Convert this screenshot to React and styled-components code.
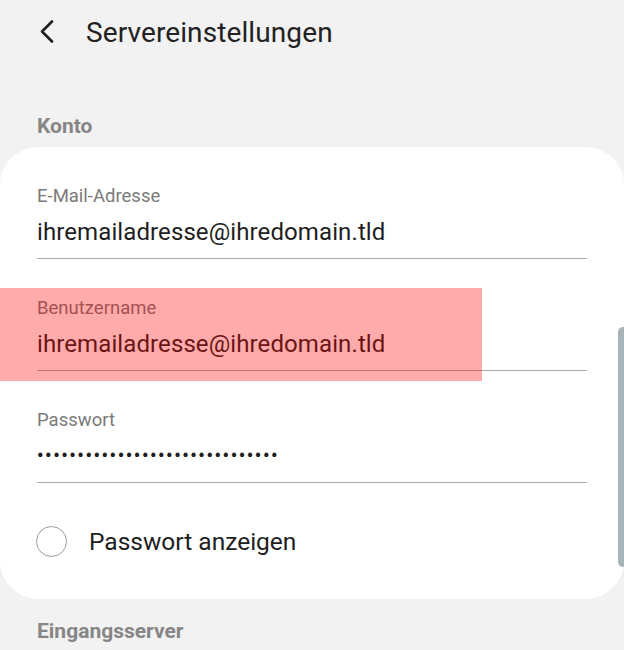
import React from "react";
import styled, { createGlobalStyle } from "styled-components";

const Global = createGlobalStyle`
  html, body { margin: 0; padding: 0; background: #f2f2f2; }
  body { font-family: Roboto, "Noto Sans", "Liberation Sans", sans-serif; -webkit-font-smoothing: antialiased; }
`;

const Screen = styled.div`
  position: relative;
  width: 624px;
  height: 650px;
  overflow: hidden;
  background: #f2f2f2;
`;

const Header = styled.header`
  display: flex;
  align-items: center;
  height: 64px;
  padding-left: 38px;
  gap: 30px;
`;

const BackButton = styled.button`
  display: flex;
  align-items: center;
  justify-content: center;
  width: 18px;
  height: 28px;
  padding: 0;
  border: 0;
  background: none;
  color: #1f1f1f;
`;

const Title = styled.h1`
  margin: 0;
  font-size: 28px;
  font-weight: 400;
  color: #222;
  letter-spacing: 0.1px;
`;

const SectionTitle = styled.h2`
  margin: 0;
  padding: ${(p) => p.$pad};
  font-size: 21px;
  line-height: 24px;
  font-weight: 700;
  color: #868686;
`;

const Card = styled.section`
  position: relative;
  background: #fff;
  border-radius: 38px;
  padding: 0 37px;
`;

const Field = styled.div`
  display: flex;
  flex-direction: column;
  padding: 37px 0 10px;
  border-bottom: 1.5px solid #a8a8a8;
`;

const Label = styled.label`
  font-size: 18.5px;
  line-height: 24px;
  color: #7a7a7a;
`;

const Value = styled.div`
  margin-top: 8px;
  font-size: 24px;
  line-height: 32px;
  color: #1e1e1e;
  letter-spacing: 0.1px;
`;

const MaskValue = styled(Value)`
  font-size: 18px;
  font-weight: 700;
  letter-spacing: 1.6px;
`;

const CheckRow = styled.div`
  display: flex;
  align-items: center;
  gap: 22px;
  height: 116px;
`;

const Radio = styled.span`
  box-sizing: border-box;
  width: 31px;
  height: 31px;
  margin-left: -1px;
  border-radius: 50%;
  border: 1.5px solid #9c9c9c;
`;

const CheckLabel = styled.span`
  font-size: 24.5px;
  color: #1e1e1e;
`;

const Highlight = styled.div`
  position: absolute;
  left: 0;
  top: 141px;
  width: 482px;
  height: 93px;
  background: rgba(255, 0, 0, 0.33);
  pointer-events: none;
`;

const Scrollbar = styled.div`
  position: absolute;
  right: 0;
  top: 327px;
  width: 6px;
  height: 240px;
  border-radius: 5px 0 0 5px;
  background: #a8b5b8;
`;

export default function App() {
  return (
    <Screen>
      <Global />
      <Header>
        <BackButton aria-label="Zurück">
          <svg width="16" height="24" viewBox="0 0 16 24" fill="none">
            <path d="M13 1.5 L3 11.5 L13 21.5" stroke="currentColor" strokeWidth="2.6" strokeLinecap="round" strokeLinejoin="round" />
          </svg>
        </BackButton>
        <Title>Servereinstellungen</Title>
      </Header>
      <SectionTitle $pad="50px 37px 9px">Konto</SectionTitle>
      <Card>
        <Field>
          <Label>E-Mail-Adresse</Label>
          <Value>ihremailadresse@ihredomain.tld</Value>
        </Field>
        <Field>
          <Label>Benutzername</Label>
          <Value>ihremailadresse@ihredomain.tld</Value>
        </Field>
        <Field>
          <Label>Passwort</Label>
          <MaskValue>{"•".repeat(30)}</MaskValue>
        </Field>
        <CheckRow>
          <Radio />
          <CheckLabel>Passwort anzeigen</CheckLabel>
        </CheckRow>
        <Highlight />
      </Card>
      <SectionTitle $pad="20px 37px 0">Eingangsserver</SectionTitle>
      <Scrollbar />
    </Screen>
  );
}
